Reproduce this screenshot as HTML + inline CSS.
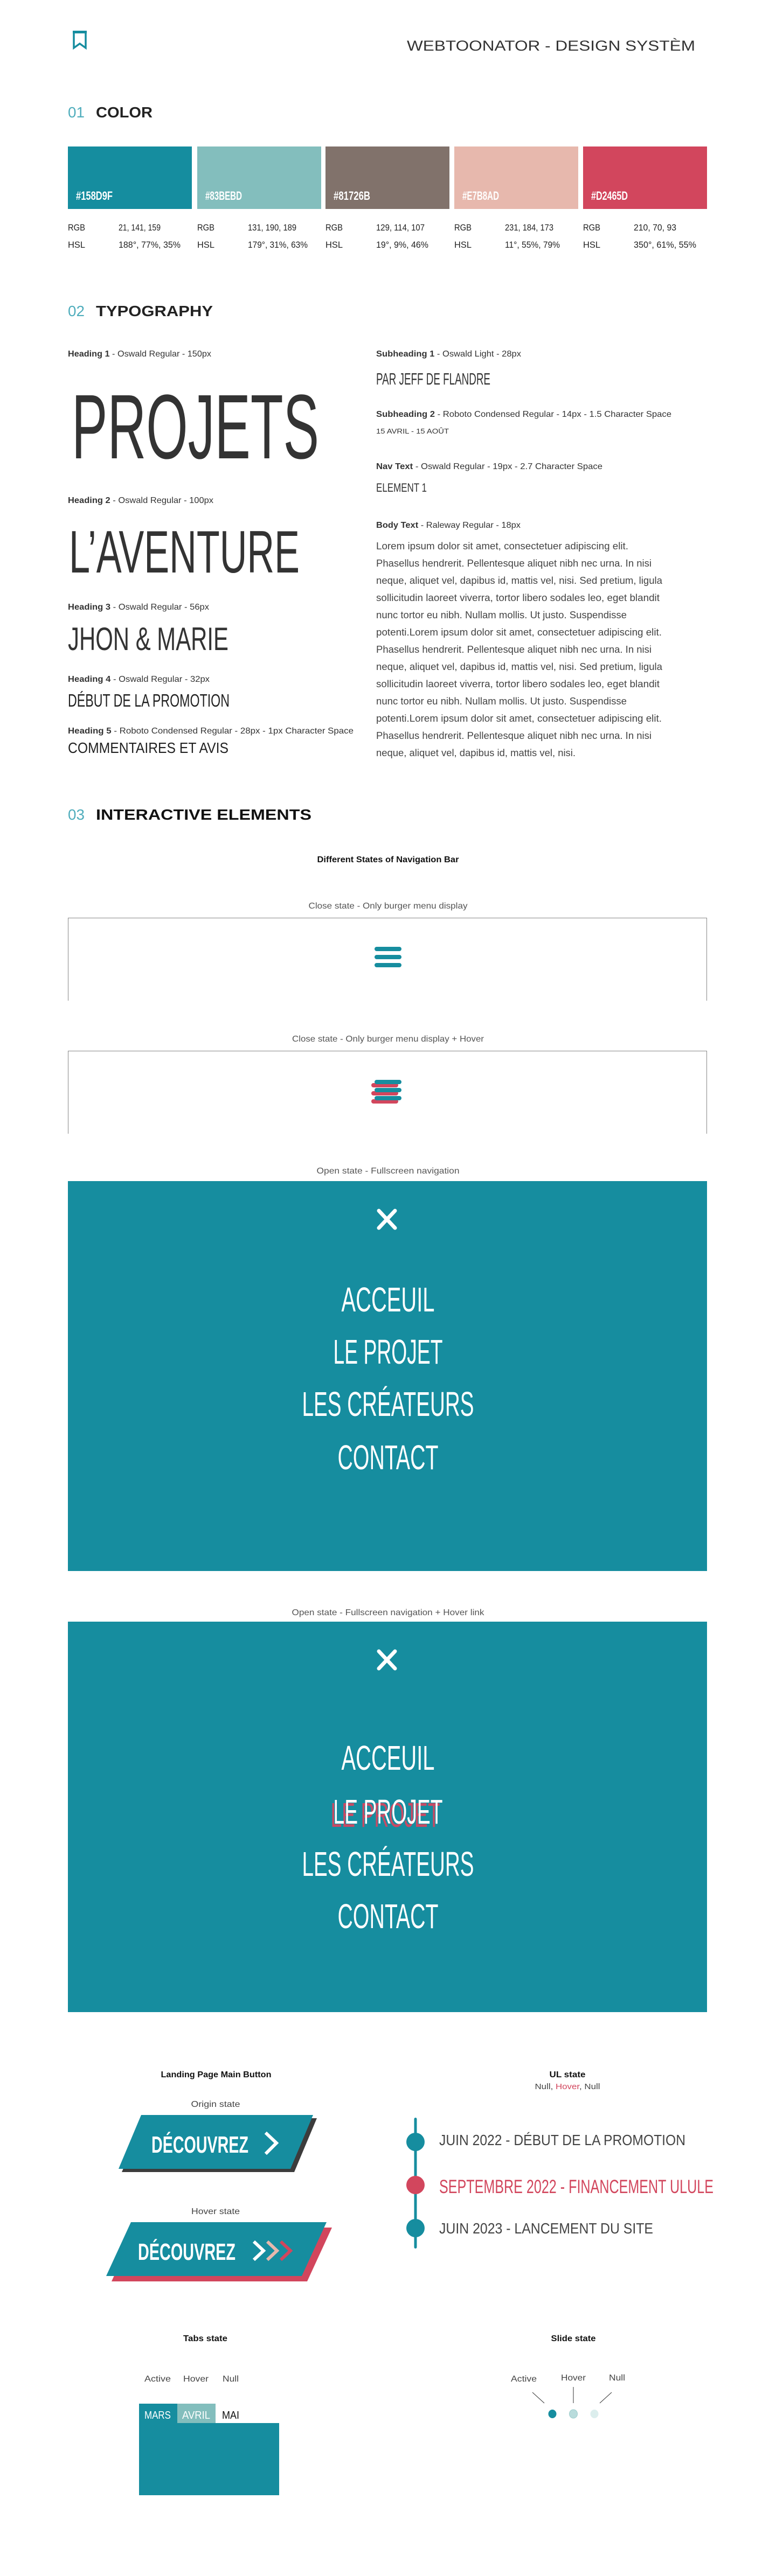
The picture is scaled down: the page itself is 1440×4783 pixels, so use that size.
<!DOCTYPE html>
<html><head><meta charset="utf-8"><style>
html,body{margin:0;padding:0;background:#fff;}
svg{display:block;}
text{font-family:"Liberation Sans Narrow","Liberation Sans",sans-serif;}
</style></head><body>
<svg width="1440" height="4783" viewBox="0 0 1440 4783" xmlns="http://www.w3.org/2000/svg">
<rect width="1440" height="4783" fill="#fff"/>
<!-- header -->
<rect x="135" y="57" width="26" height="5" fill="#168d9f"/>
<path d="M137 59 H159 V89 L148 81 L137 89 Z" fill="none" stroke="#168d9f" stroke-width="3.5" stroke-linejoin="miter"/>
<text x="755" y="94" font-size="27" fill="#333" textLength="535" lengthAdjust="spacingAndGlyphs">WEBTOONATOR - DESIGN SYSTÈM</text>

<!-- 01 color -->
<text x="126" y="218" font-size="28" fill="#4fadbc" textLength="31" lengthAdjust="spacingAndGlyphs">01</text>
<text x="178" y="218" font-size="28" font-weight="bold" fill="#222" textLength="105" lengthAdjust="spacingAndGlyphs">COLOR</text>
<rect x="126" y="272" width="230" height="116" fill="#158d9f"/>
<rect x="366" y="272" width="230" height="116" fill="#83bebd"/>
<rect x="604" y="272" width="230" height="116" fill="#81726b"/>
<rect x="843" y="272" width="230" height="116" fill="#e7b8ad"/>
<rect x="1082" y="272" width="230" height="116" fill="#d2465d"/>
<g font-size="22" font-weight="bold" fill="#fff">
<text x="141" y="371" textLength="68" lengthAdjust="spacingAndGlyphs">#158D9F</text>
<text x="381" y="371" textLength="68" lengthAdjust="spacingAndGlyphs">#83BEBD</text>
<text x="619" y="371" textLength="68" lengthAdjust="spacingAndGlyphs">#81726B</text>
<text x="858" y="371" textLength="68" lengthAdjust="spacingAndGlyphs">#E7B8AD</text>
<text x="1097" y="371" textLength="68" lengthAdjust="spacingAndGlyphs">#D2465D</text>
</g>
<g font-size="17" fill="#222">
<text x="126" y="428" textLength="32" lengthAdjust="spacingAndGlyphs">RGB</text>
<text x="220" y="428" textLength="78" lengthAdjust="spacingAndGlyphs">21, 141, 159</text>
<text x="126" y="460" textLength="32" lengthAdjust="spacingAndGlyphs">HSL</text>
<text x="220" y="460" textLength="115" lengthAdjust="spacingAndGlyphs">188°, 77%, 35%</text>
<text x="366" y="428" textLength="32" lengthAdjust="spacingAndGlyphs">RGB</text>
<text x="460" y="428" textLength="90" lengthAdjust="spacingAndGlyphs">131, 190, 189</text>
<text x="366" y="460" textLength="32" lengthAdjust="spacingAndGlyphs">HSL</text>
<text x="460" y="460" textLength="111" lengthAdjust="spacingAndGlyphs">179°, 31%, 63%</text>
<text x="604" y="428" textLength="32" lengthAdjust="spacingAndGlyphs">RGB</text>
<text x="698" y="428" textLength="90" lengthAdjust="spacingAndGlyphs">129, 114, 107</text>
<text x="604" y="460" textLength="32" lengthAdjust="spacingAndGlyphs">HSL</text>
<text x="698" y="460" textLength="97" lengthAdjust="spacingAndGlyphs">19°, 9%, 46%</text>
<text x="843" y="428" textLength="32" lengthAdjust="spacingAndGlyphs">RGB</text>
<text x="937" y="428" textLength="90" lengthAdjust="spacingAndGlyphs">231, 184, 173</text>
<text x="843" y="460" textLength="32" lengthAdjust="spacingAndGlyphs">HSL</text>
<text x="937" y="460" textLength="102" lengthAdjust="spacingAndGlyphs">11°, 55%, 79%</text>
<text x="1082" y="428" textLength="32" lengthAdjust="spacingAndGlyphs">RGB</text>
<text x="1176" y="428" textLength="79" lengthAdjust="spacingAndGlyphs">210, 70, 93</text>
<text x="1082" y="460" textLength="32" lengthAdjust="spacingAndGlyphs">HSL</text>
<text x="1176" y="460" textLength="116" lengthAdjust="spacingAndGlyphs">350°, 61%, 55%</text>
</g>

<!-- 02 typography -->
<text x="126" y="587" font-size="28" fill="#4fadbc" textLength="31" lengthAdjust="spacingAndGlyphs">02</text>
<text x="178" y="587" font-size="28" font-weight="bold" fill="#222" textLength="217" lengthAdjust="spacingAndGlyphs">TYPOGRAPHY</text>
<g font-size="16" fill="#333">
<text x="126" y="662" textLength="266" lengthAdjust="spacingAndGlyphs"><tspan font-weight="bold">Heading 1</tspan> - Oswald Regular - 150px</text>
<text x="126" y="934" textLength="270" lengthAdjust="spacingAndGlyphs"><tspan font-weight="bold">Heading 2</tspan> - Oswald Regular - 100px</text>
<text x="126" y="1132" textLength="262" lengthAdjust="spacingAndGlyphs"><tspan font-weight="bold">Heading 3</tspan> - Oswald Regular - 56px</text>
<text x="126" y="1266" textLength="263" lengthAdjust="spacingAndGlyphs"><tspan font-weight="bold">Heading 4</tspan> - Oswald Regular - 32px</text>
<text x="126" y="1362" textLength="530" lengthAdjust="spacingAndGlyphs"><tspan font-weight="bold">Heading 5</tspan> - Roboto  Condensed Regular - 28px - 1px Character Space</text>
<text x="698" y="662" textLength="269" lengthAdjust="spacingAndGlyphs"><tspan font-weight="bold">Subheading 1</tspan> - Oswald Light - 28px</text>
<text x="698" y="774" textLength="548" lengthAdjust="spacingAndGlyphs"><tspan font-weight="bold">Subheading 2</tspan> - Roboto Condensed Regular - 14px - 1.5 Character Space</text>
<text x="698" y="871" textLength="420" lengthAdjust="spacingAndGlyphs"><tspan font-weight="bold">Nav Text</tspan> - Oswald Regular - 19px - 2.7 Character Space</text>
<text x="698" y="980" textLength="268" lengthAdjust="spacingAndGlyphs"><tspan font-weight="bold">Body Text</tspan> - Raleway Regular - 18px</text>
</g>
<text x="133" y="851" font-size="170" fill="#333" textLength="459" lengthAdjust="spacingAndGlyphs">PROJETS</text>
<text x="128" y="1063" font-size="111" fill="#333" textLength="428" lengthAdjust="spacingAndGlyphs">L’AVENTURE</text>
<text x="126" y="1207" font-size="60" fill="#333" textLength="298" lengthAdjust="spacingAndGlyphs">JHON &amp; MARIE</text>
<text x="126" y="1312" font-size="33" fill="#222" textLength="300" lengthAdjust="spacingAndGlyphs">DÉBUT DE LA PROMOTION</text>
<text x="126" y="1398" font-size="28" fill="#222" textLength="298" lengthAdjust="spacingAndGlyphs">COMMENTAIRES ET AVIS</text>
<text x="698" y="714" font-size="31" fill="#333" textLength="212" lengthAdjust="spacingAndGlyphs">PAR JEFF DE FLANDRE</text>
<text x="698" y="805" font-size="13" fill="#333" textLength="135" lengthAdjust="spacingAndGlyphs">15 AVRIL - 15 AOÛT</text>
<text x="698" y="913" font-size="22" fill="#333" textLength="94" lengthAdjust="spacingAndGlyphs">ELEMENT 1</text>
<g font-size="18" fill="#444" font-family="Liberation Sans, sans-serif">
<text x="698" y="1020" textLength="468" lengthAdjust="spacingAndGlyphs">Lorem ipsum dolor sit amet, consectetuer adipiscing elit.</text>
<text x="698" y="1052" textLength="511" lengthAdjust="spacingAndGlyphs">Phasellus hendrerit. Pellentesque aliquet nibh nec urna. In nisi</text>
<text x="698" y="1084" textLength="531" lengthAdjust="spacingAndGlyphs">neque, aliquet vel, dapibus id, mattis vel, nisi. Sed pretium, ligula</text>
<text x="698" y="1116" textLength="526" lengthAdjust="spacingAndGlyphs">sollicitudin laoreet viverra, tortor libero sodales leo, eget blandit</text>
<text x="698" y="1148" textLength="465" lengthAdjust="spacingAndGlyphs">nunc tortor eu nibh. Nullam mollis. Ut justo. Suspendisse</text>
<text x="698" y="1180" textLength="530" lengthAdjust="spacingAndGlyphs">potenti.Lorem ipsum dolor sit amet, consectetuer adipiscing elit.</text>
<text x="698" y="1212" textLength="511" lengthAdjust="spacingAndGlyphs">Phasellus hendrerit. Pellentesque aliquet nibh nec urna. In nisi</text>
<text x="698" y="1244" textLength="531" lengthAdjust="spacingAndGlyphs">neque, aliquet vel, dapibus id, mattis vel, nisi. Sed pretium, ligula</text>
<text x="698" y="1276" textLength="526" lengthAdjust="spacingAndGlyphs">sollicitudin laoreet viverra, tortor libero sodales leo, eget blandit</text>
<text x="698" y="1308" textLength="465" lengthAdjust="spacingAndGlyphs">nunc tortor eu nibh. Nullam mollis. Ut justo. Suspendisse</text>
<text x="698" y="1340" textLength="530" lengthAdjust="spacingAndGlyphs">potenti.Lorem ipsum dolor sit amet, consectetuer adipiscing elit.</text>
<text x="698" y="1372" textLength="511" lengthAdjust="spacingAndGlyphs">Phasellus hendrerit. Pellentesque aliquet nibh nec urna. In nisi</text>
<text x="698" y="1404" textLength="370" lengthAdjust="spacingAndGlyphs">neque, aliquet vel, dapibus id, mattis vel, nisi.</text>
</g>

<!-- 03 interactive -->
<text x="126" y="1522" font-size="28" fill="#4fadbc" textLength="31" lengthAdjust="spacingAndGlyphs">03</text>
<text x="178" y="1522" font-size="28" font-weight="bold" fill="#111" textLength="400" lengthAdjust="spacingAndGlyphs">INTERACTIVE ELEMENTS</text>
<text x="720" y="1601" font-size="16" font-weight="bold" fill="#111" text-anchor="middle" textLength="263" lengthAdjust="spacingAndGlyphs">Different States of Navigation Bar</text>
<g font-size="16" fill="#555" text-anchor="middle">
<text x="720" y="1687" textLength="295" lengthAdjust="spacingAndGlyphs">Close state - Only burger menu display</text>
<text x="720" y="1934" textLength="356" lengthAdjust="spacingAndGlyphs">Close state - Only burger menu display + Hover</text>
<text x="720" y="2179" textLength="265" lengthAdjust="spacingAndGlyphs">Open state - Fullscreen navigation</text>
<text x="720" y="2999" textLength="357" lengthAdjust="spacingAndGlyphs">Open state - Fullscreen navigation + Hover link</text>
</g>
<path d="M126.5 1858 V1704.5 H1311.5 V1858" fill="none" stroke="#888" stroke-width="1"/>
<g fill="#168d9f">
<rect x="695" y="1758" width="50" height="8" rx="4"/>
<rect x="695" y="1773" width="50" height="8" rx="4"/>
<rect x="695" y="1788" width="50" height="8" rx="4"/>
</g>
<path d="M126.5 2105 V1951.5 H1311.5 V2105" fill="none" stroke="#888" stroke-width="1"/>
<g fill="#d2465d">
<rect x="689" y="2011" width="50" height="8" rx="4"/>
<rect x="689" y="2026" width="50" height="8" rx="4"/>
<rect x="689" y="2041" width="50" height="8" rx="4"/>
</g>
<g fill="#168d9f">
<rect x="695" y="2005" width="50" height="8" rx="4"/>
<rect x="695" y="2020" width="50" height="8" rx="4"/>
<rect x="695" y="2035" width="50" height="8" rx="4"/>
</g>

<!-- open panel 1 -->
<rect x="126" y="2193" width="1186" height="724" fill="#168d9f"/>
<path d="M703 2248 L733 2280 M733 2248 L703 2280" stroke="#fff" stroke-width="7" stroke-linecap="round"/>
<g font-size="64" fill="#fff" text-anchor="middle">
<text x="720" y="2435" textLength="173" lengthAdjust="spacingAndGlyphs">ACCEUIL</text>
<text x="720" y="2532" textLength="203" lengthAdjust="spacingAndGlyphs">LE PROJET</text>
<text x="720" y="2629" textLength="319" lengthAdjust="spacingAndGlyphs">LES CRÉATEURS</text>
<text x="720" y="2728" textLength="187" lengthAdjust="spacingAndGlyphs">CONTACT</text>
</g>

<!-- open panel 2 -->
<rect x="126" y="3011" width="1186" height="725" fill="#168d9f"/>
<path d="M703 3066 L733 3098 M733 3066 L703 3098" stroke="#fff" stroke-width="7" stroke-linecap="round"/>
<text x="715" y="3392" font-size="64" fill="#c94a64" text-anchor="middle" textLength="203" lengthAdjust="spacingAndGlyphs">LE PROJET</text>
<g font-size="64" fill="#fff" text-anchor="middle">
<text x="720" y="3286" textLength="173" lengthAdjust="spacingAndGlyphs">ACCEUIL</text>
<text x="720" y="3386" textLength="203" lengthAdjust="spacingAndGlyphs">LE PROJET</text>
<text x="720" y="3483" textLength="319" lengthAdjust="spacingAndGlyphs">LES CRÉATEURS</text>
<text x="720" y="3580" textLength="187" lengthAdjust="spacingAndGlyphs">CONTACT</text>
</g>

<!-- buttons -->
<text x="401" y="3857" font-size="16" font-weight="bold" fill="#111" text-anchor="middle" textLength="205" lengthAdjust="spacingAndGlyphs">Landing Page Main Button</text>
<text x="1053" y="3857" font-size="16" font-weight="bold" fill="#111" text-anchor="middle" textLength="67" lengthAdjust="spacingAndGlyphs">UL state</text>
<text x="1053" y="3879" font-size="15" fill="#444" text-anchor="middle" textLength="121" lengthAdjust="spacingAndGlyphs">Null, <tspan fill="#d2465d">Hover</tspan>, Null</text>
<text x="400" y="3912" font-size="16" fill="#444" text-anchor="middle" textLength="91" lengthAdjust="spacingAndGlyphs">Origin state</text>
<polygon points="269,3933 588,3933 546,4033 226,4033" fill="#3c3c3c"/>
<polygon points="262,3927 581,3927 539,4027 220,4027" fill="#168d9f"/>
<text x="281" y="3997" font-size="44" font-weight="bold" fill="#fff" textLength="180" lengthAdjust="spacingAndGlyphs">DÉCOUVREZ</text>
<polyline points="495,3962 513,3979 495,3997" fill="none" stroke="#fff" stroke-width="6" stroke-linecap="square"/>
<text x="400" y="4111" font-size="16" fill="#444" text-anchor="middle" textLength="90" lengthAdjust="spacingAndGlyphs">Hover state</text>
<polygon points="253,4136 616,4136 570,4236 207,4236" fill="#d2465d"/>
<polygon points="243,4126 606,4126 560,4226 197,4226" fill="#168d9f"/>
<text x="256" y="4196" font-size="44" font-weight="bold" fill="#fff" textLength="181" lengthAdjust="spacingAndGlyphs">DÉCOUVREZ</text>
<polyline points="521,4162 539,4179 521,4196" fill="none" stroke="#d2465d" stroke-width="6"/>
<polyline points="496,4162 514,4179 496,4196" fill="none" stroke="#e7b8ad" stroke-width="6"/>
<polyline points="471,4162 489,4179 471,4196" fill="none" stroke="#fff" stroke-width="6"/>

<!-- timeline -->
<rect x="768.5" y="3932" width="5" height="243" rx="2.5" fill="#168d9f"/>
<circle cx="771" cy="3977" r="17" fill="#168d9f"/>
<circle cx="771" cy="4057" r="17" fill="#d2465d"/>
<circle cx="771" cy="4137" r="17" fill="#168d9f"/>
<text x="815" y="3983" font-size="28" fill="#444" textLength="457" lengthAdjust="spacingAndGlyphs">JUIN 2022 - DÉBUT DE LA PROMOTION</text>
<text x="815" y="4072" font-size="35" fill="#d2465d" textLength="509" lengthAdjust="spacingAndGlyphs">SEPTEMBRE 2022 - FINANCEMENT ULULE</text>
<text x="815" y="4147" font-size="28" fill="#444" textLength="397" lengthAdjust="spacingAndGlyphs">JUIN 2023 - LANCEMENT DU SITE</text>

<!-- tabs -->
<text x="381" y="4347" font-size="16" font-weight="bold" fill="#111" text-anchor="middle" textLength="82" lengthAdjust="spacingAndGlyphs">Tabs state</text>
<g font-size="16" fill="#444">
<text x="268" y="4422" textLength="49" lengthAdjust="spacingAndGlyphs">Active</text>
<text x="340" y="4422" textLength="47" lengthAdjust="spacingAndGlyphs">Hover</text>
<text x="413" y="4422" textLength="30" lengthAdjust="spacingAndGlyphs">Null</text>
</g>
<rect x="258" y="4463" width="71" height="36" fill="#168d9f"/>
<rect x="329" y="4463" width="71" height="36" fill="#83bebd"/>
<rect x="258" y="4499" width="260" height="134" fill="#168d9f"/>
<text x="268" y="4491" font-size="20" fill="#fff" textLength="49" lengthAdjust="spacingAndGlyphs">MARS</text>
<text x="338" y="4491" font-size="20" fill="#fff" textLength="52" lengthAdjust="spacingAndGlyphs">AVRIL</text>
<text x="412" y="4491" font-size="20" fill="#111" textLength="32" lengthAdjust="spacingAndGlyphs">MAI</text>

<!-- slide -->
<text x="1064" y="4347" font-size="16" font-weight="bold" fill="#111" text-anchor="middle" textLength="83" lengthAdjust="spacingAndGlyphs">Slide state</text>
<g font-size="16" fill="#444">
<text x="948" y="4422" textLength="48" lengthAdjust="spacingAndGlyphs">Active</text>
<text x="1041" y="4420" textLength="46" lengthAdjust="spacingAndGlyphs">Hover</text>
<text x="1130" y="4420" textLength="30" lengthAdjust="spacingAndGlyphs">Null</text>
</g>
<path d="M988 4442 L1010 4462 M1064 4432 V4462 M1135 4442 L1113 4462" stroke="#333" stroke-width="1" fill="none"/>
<ellipse cx="1025" cy="4482" rx="7.5" ry="8" fill="#168d9f"/>
<ellipse cx="1064" cy="4482" rx="7.5" ry="8" fill="#b9dcdc" stroke="#9ccccc" stroke-width="1"/>
<ellipse cx="1103" cy="4482" rx="7.5" ry="8" fill="#dceeed"/>
</svg>
</body></html>
